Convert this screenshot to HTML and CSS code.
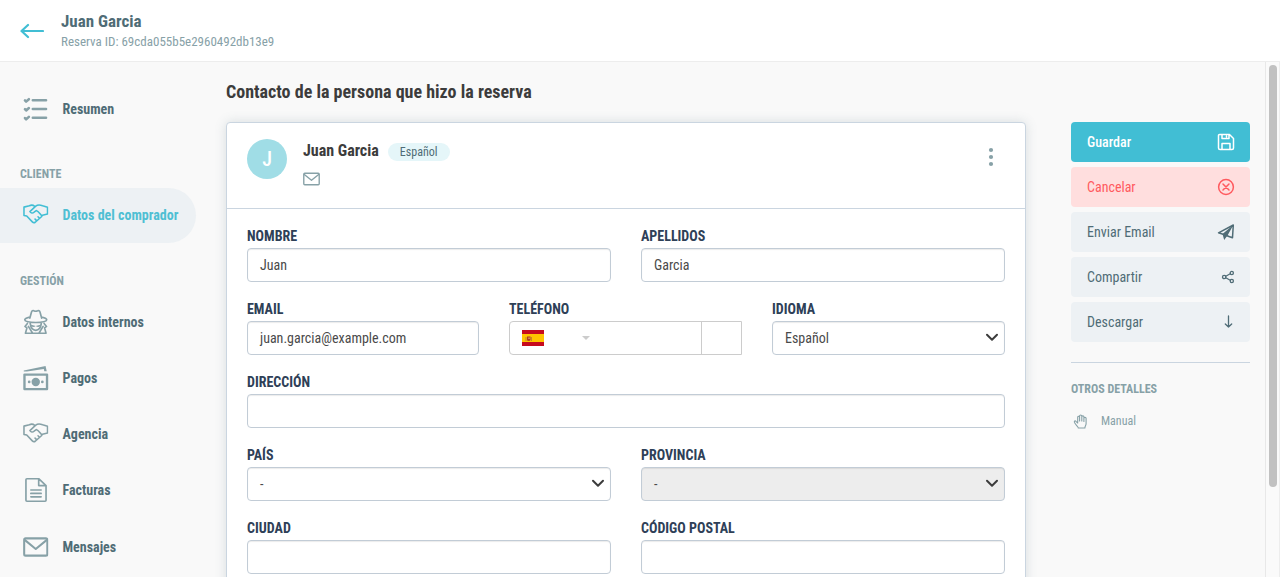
FILE: index.html
```
<!DOCTYPE html>
<html lang="es">
<head>
    <meta charset="UTF-8">
    <meta name="viewport" content="width=device-width, initial-scale=1.0">
    <title>Juan Garcia - Reserva</title>
    <link rel="stylesheet" href="styles.css">
</head>
<body>
    <!-- shared icons -->
    <svg class="sprite" width="0" height="0">
        <symbol id="handshake" viewBox="0 0 26 20">
            <path d="M12 2.200C10.500 1 8 .8 6.500 1.600L1 3v8.500l2.800.6L9.500 18c1 1 2 1 3 .4l6.300-5.600 1-1.600 5.200-1.200V3L20 1.600C17.500.7 14.500.8 13 2L7 7.500c.8 1.900 3 1.900 4.300.7L13.500 6.500c2 .5 4 3.500 5.700 5.300M15.300 12.800l1.500 1.500M12.300 15.200l1.500 1.500"/>
        </symbol>
        <symbol id="envelope" viewBox="0 0 26 20">
            <rect x="1.200" y="1.200" width="23.600" height="17.600" rx="1.500"/>
            <path d="m2 3 11 9L24 3"/>
        </symbol>
    </svg>

    <header class="topbar">
        <a href="#" class="back">
            <svg width="24" height="16" viewBox="0 0 24 16"><path d="M8 2 1.500 8 8 14M2 8h21"/></svg>
        </a>
        <div>
            <div class="topbar-name">Juan Garcia</div>
            <div class="topbar-id">Reserva ID: 69cda055b5e2960492db13e9</div>
        </div>
    </header>

    <div class="layout">
        <nav class="sidebar">
            <a href="#" class="nav-item">
                <svg class="nav-icon" viewBox="0 0 26 26"><g stroke-width="2.600"><path d="M10 4h13.500M10 13h13.500M10 22h13.500M2 4.200l1.200 1.300L6 3M2 13.200l1.200 1.300L6 12M2 22.200l1.200 1.300L6 21"/></g></svg>
                <span>Resumen</span>
            </a>
            <div class="nav-title">CLIENTE</div>
            <a href="#" class="nav-item active">
                <svg class="nav-icon shake"><use href="#handshake"/></svg>
                <span>Datos del comprador</span>
            </a>
            <div class="nav-title">GESTIÓN</div>
            <a href="#" class="nav-item">
                <svg class="nav-icon spy" viewBox="0 0 26 26"><path d="M7 9 8.600 3c.4-1.400 1.500-1.900 2.500-1.400 1.300.6 2.500.6 3.800 0 1-.5 2.100 0 2.500 1.400L19 9M6.800 8C3.500 8.700 1.800 9.700 1.800 10.800c0 1.700 5 2.700 11.200 2.700s11.200-1 11.200-2.700c0-1.100-1.700-2.100-5-2.800M7.300 14.500c.5 4 2.700 7 5.700 7s5.200-3 5.700-7M4.500 14.500 2 17.500l2 1.500-1.500 5.500h21L22 19l2-1.500-2.500-3M5.500 17.500l4 6.500M20.500 17.500l-4 6.500"/><path class="fill" d="M7.500 15.500 13 17l5.500-1.500c0 2.500-3.500 3.300-5.500 1.500-2 1.800-5.500 1-5.500-1.500z"/></svg>
                <span>Datos internos</span>
            </a>
            <a href="#" class="nav-item">
                <svg class="nav-icon" viewBox="0 0 26 26">
                    <rect x="1.500" y="9.500" width="23" height="14.800" stroke-width="2.400"/>
                    <path class="fill" d="M.8 5.300 23 .8l1.200 5.400h-2.500l-.5-2.400L4 6.300H.8z"/>
                    <circle class="fill" cx="13" cy="17" r="4.300"/>
                    <circle class="fill" cx="6.300" cy="17" r="1.400"/>
                    <circle class="fill" cx="19.700" cy="17" r="1.400"/>
                </svg>
                <span>Pagos</span>
            </a>
            <a href="#" class="nav-item">
                <svg class="nav-icon shake"><use href="#handshake"/></svg>
                <span>Agencia</span>
            </a>
            <a href="#" class="nav-item">
                <svg class="nav-icon" viewBox="0 0 26 26"><path d="M16 1.500H4q-1 0-1 1v21q0 1 1 1h18.500q1 0 1-1v-15zV8.500h7.500M8 13h10.500M8 16.500h10.500M8 20h10.500" stroke-width="1.700"/></svg>
                <span>Facturas</span>
            </a>
            <a href="#" class="nav-item">
                <svg class="nav-icon thick"><use href="#envelope"/></svg>
                <span>Mensajes</span>
            </a>
        </nav>

        <main class="content">
            <h1>Contacto de la persona que hizo la reserva</h1>

            <section class="card">
                <div class="card-header">
                    <div class="avatar">J</div>
                    <div class="person">
                        <div class="person-name">Juan Garcia <span class="badge">Español</span></div>
                        <svg class="mail" width="17" height="14"><use href="#envelope"/></svg>
                    </div>
                    <svg class="dots" width="6" height="20" viewBox="0 0 6 20"><circle cx="3" cy="3" r="2.100"/><circle cx="3" cy="10" r="2.100"/><circle cx="3" cy="17" r="2.100"/></svg>
                </div>

                <form class="form">
                    <div class="row">
                        <div class="field">
                            <label>NOMBRE</label>
                            <div class="input">Juan</div>
                        </div>
                        <div class="field">
                            <label>APELLIDOS</label>
                            <div class="input">Garcia</div>
                        </div>
                    </div>
                    <div class="row thirds">
                        <div class="field">
                            <label>EMAIL</label>
                            <div class="input">juan.garcia@example.com</div>
                        </div>
                        <div class="field">
                            <label>TELÉFONO</label>
                            <div class="phone">
                                <div class="phone-number">
                                    <svg width="24" height="18" viewBox="0 0 24 18">
                                        <path fill="#c60b1e" d="M1 1h22v16H1z"/>
                                        <path fill="#ffc400" d="M1 5h22v8H1z"/>
                                        <path fill="#c8842b" d="M4.500 8h1v4h-1zM10 8h1v4h-1z"/>
                                        <path fill="#ad3b20" d="M6 7.500h3.500v3.200c0 1.600-3.500 1.600-3.500 0z"/>
                                        <path fill="#d9a06a" d="M7.300 8.500h1.500V10H7.300z"/>
                                    </svg>
                                    <span class="caret"></span>
                                </div>
                                <div class="phone-addon"></div>
                            </div>
                        </div>
                        <div class="field">
                            <label>IDIOMA</label>
                            <div class="input select">Español<svg width="14" height="9" viewBox="0 0 14 9"><path d="m2 1.700 5 5 5-5"/></svg></div>
                        </div>
                    </div>
                    <div class="row">
                        <div class="field">
                            <label>DIRECCIÓN</label>
                            <div class="input"></div>
                        </div>
                    </div>
                    <div class="row">
                        <div class="field">
                            <label>PAÍS</label>
                            <div class="input select">-<svg width="14" height="9" viewBox="0 0 14 9"><path d="m2 1.700 5 5 5-5"/></svg></div>
                        </div>
                        <div class="field">
                            <label>PROVINCIA</label>
                            <div class="input select disabled">-<svg width="14" height="9" viewBox="0 0 14 9"><path d="m2 1.700 5 5 5-5"/></svg></div>
                        </div>
                    </div>
                    <div class="row">
                        <div class="field">
                            <label>CIUDAD</label>
                            <div class="input"></div>
                        </div>
                        <div class="field">
                            <label>CÓDIGO POSTAL</label>
                            <div class="input"></div>
                        </div>
                    </div>
                </form>
            </section>
        </main>

        <aside class="actions">
            <a href="#" class="btn primary">Guardar
                <svg width="18" height="18" viewBox="0 0 18 18"><path d="M2.500 1.500h10l4 4v9.500a1.500 1.500 0 0 1-1.500 1.500H3A1.500 1.500 0 0 1 1.500 15V2.500a1 1 0 0 1 1-1zM5 1.500v4h7v-4M5 16.500v-6h8v6M9.500 3v1"/></svg>
            </a>
            <a href="#" class="btn danger">Cancelar
                <svg width="18" height="18" viewBox="0 0 18 18"><circle cx="9" cy="9" r="7.400"/><path d="m6 6 6 6M12 6l-6 6"/></svg>
            </a>
            <a href="#" class="btn">Enviar Email
                <svg width="18" height="18" viewBox="0 0 18 18"><path d="M6 11.300 1.500 9.800 16.300 2l-.8 12.800-4.300-1.600"/><path class="fill" d="M5.500 11 16.500 1.800 10.800 12l1.200 1.500-2.500.2L7.200 17z"/></svg>
            </a>
            <a href="#" class="btn">Compartir
                <svg class="thin" width="14" height="14" viewBox="0 0 14 14"><circle cx="3.200" cy="7" r="1.700"/><circle cx="10.800" cy="3" r="1.600"/><circle cx="10.800" cy="11" r="1.600"/><path d="m4.800 6.200 4.400-2.400M4.800 7.800l4.400 2.400"/></svg>
            </a>
            <a href="#" class="btn">Descargar
                <svg class="thin" width="14" height="14" viewBox="0 0 14 14"><path d="M7.500 1v11M4.300 9l3.200 3 3.200-3"/></svg>
            </a>
            <div class="details">
                <div class="details-title">OTROS DETALLES</div>
                <div class="details-item">
                    <svg width="15" height="15" viewBox="0 0 15 15"><path d="M4.700 8.500V3.200c0-1.200 1.900-1.200 1.900 0V7 2c0-1.400 2.200-1.400 2.200 0v5-4.200c0-1.300 2.100-1.300 2.100 0V7.500 4.300c0-1.300 2.200-1.300 2.200 0V9.500c0 2-1.200 2.500-1.200 4.500H5.300C5.300 12.500 3 11.500 1.500 8.500c-.6-1.300.6-2.200 1.500-1.200L4.700 9"/></svg>
                    Manual
                </div>
            </div>
        </aside>

        <div class="scrollbar"><div class="scroll-thumb"></div></div>
    </div>
</body>
</html>
```
FILE: styles.css
```
* {
    margin: 0;
    padding: 0;
    box-sizing: border-box;
}

body {
    height: 577px;
    overflow: hidden;
    display: flex;
    flex-direction: column;
    background: #f9f9f9;
    color: #4a4a4a;
    font-family: "Roboto Condensed", Roboto, "Liberation Sans", sans-serif;
    font-stretch: 75%;
    font-size: 14px;
    line-height: 20px;
}

a {
    color: inherit;
    text-decoration: none;
}

svg {
    fill: none;
    stroke: currentColor;
    stroke-width: 1.5;
    stroke-linejoin: round;
    stroke-linecap: round;
    flex-shrink: 0;
}

.fill {
    fill: currentColor;
    stroke: none;
}

.sprite {
    display: block;
}

.topbar {
    height: 62px;
    flex-shrink: 0;
    display: flex;
    align-items: center;
    gap: 17px;
    padding-left: 20px;
    background: #fff;
    border-bottom: 1px solid #ededed;
}

.back {
    color: #41bed4;
    height: 16px;
}

.back svg {
    display: block;
    stroke-width: 2.2;
}

.topbar-name {
    padding-top: 1px;
    color: #4f6c76;
    font-size: 17px;
    font-weight: 700;
}

.topbar-id {
    color: #87a1a7;
    font-size: 13px;
    line-height: 21px;
}

.layout {
    display: flex;
    flex: 1;
    min-height: 0;
    overflow: hidden;
}

/* sidebar */
.sidebar {
    width: 196px;
    flex-shrink: 0;
    padding-top: 19px;
}

.nav-item {
    display: flex;
    align-items: center;
    gap: 14px;
    height: 55px;
    margin-bottom: 1.2px;
    padding-left: 23px;
    border-radius: 0 28px 28px 0;
    color: #4f6c76;
    font-weight: 700;
}

.nav-icon {
    width: 25.5px;
    height: 26px;
    color: #87a1a7;
}

.thick {
    stroke-width: 2.1;
}

.shake {
    margin-top: -2px;
    stroke-width: 1.6;
}

.spy {
    stroke-width: 1.7;
}

.active {
    background: #edf1f4;
    color: #4fbfd3;
}

.active .nav-icon {
    color: #41bed4;
}

.nav-title {
    padding: 27px 0 3.5px 20px;
    color: #87a1a7;
    font-size: 12px;
    font-weight: 700;
}

/* contact card */
.content {
    width: 800px;
    margin-left: 30px;
    padding-top: 20px;
}

h1 {
    color: #3c3c3c;
    font-size: 18px;
    line-height: 20px;
    margin-bottom: 20px;
}

.card {
    background: #fff;
    border: 1px solid #cad5e0;
    border-radius: 4px;
    box-shadow: 0 0 12px rgba(79, 108, 118, 0.2);
}

.card-header {
    display: flex;
    height: 86px;
    padding: 16px 20px;
    border-bottom: 1px solid #cad5e0;
}

.avatar {
    width: 40px;
    height: 40px;
    border-radius: 50%;
    background: #a0dde6;
    color: #fff;
    font-size: 20px;
    font-weight: 500;
    line-height: 40px;
    text-align: center;
}

.person {
    flex: 1;
    margin-left: 16px;
}

.person-name {
    display: flex;
    align-items: center;
    gap: 9px;
    height: 24px;
    color: #3c3c3c;
    font-size: 16px;
    font-weight: 700;
}

.badge {
    height: 18px;
    padding: 0 12px;
    margin-top: 2px;
    border-radius: 9px;
    background: #e5f6f9;
    color: #4f6c76;
    font-size: 12px;
    font-weight: 400;
    line-height: 18px;
}

.mail {
    display: block;
    margin-top: 8.5px;
    color: #87a1a7;
    stroke-width: 2.1;
}

.dots {
    margin: 8px 11px 0 0;
    fill: #87a1a7;
    stroke: none;
}

.form {
    padding: 17px 20px 0;
}

.row {
    display: flex;
    gap: 30px;
    height: 73px;
}

.thirds {
    display: grid;
    grid-template-columns: 232px 233px 233px;
}

.field {
    flex: 1;
}

label {
    display: block;
    height: 22px;
    color: #2e4057;
    font-weight: 700;
}

.input {
    height: 34px;
    padding: 0 12px;
    background: #fff;
    border: 1px solid #c2ccd6;
    border-radius: 4px;
    box-shadow: inset 0 1px 1px rgba(0, 0, 0, 0.08);
    line-height: 33px;
}

.select {
    display: flex;
    justify-content: space-between;
    padding-right: 5px;
}

.select svg {
    margin-top: 11px;
    color: #3c3c3c;
    stroke-width: 2;
}

.disabled {
    background: #ededed;
}

.phone {
    display: flex;
    height: 34px;
    border: 1px solid #ccc;
    border-radius: 4px 0 0 4px;
}

.phone-number {
    flex: 1;
    display: flex;
    align-items: center;
    gap: 37px;
    padding-left: 11px;
}

.phone-number svg {
    stroke: none;
}

.phone-addon {
    width: 40px;
    border-left: 1px solid #ccc;
}

.caret {
    border: 4px solid transparent;
    border-top-color: #ccc;
    border-bottom: 0;
}

/* right column */
.actions {
    width: 179px;
    margin-left: 45px;
    padding-top: 60px;
}

.btn {
    display: flex;
    align-items: center;
    justify-content: space-between;
    height: 40px;
    margin-bottom: 5px;
    padding: 0 15px 0 16px;
    border-radius: 4px;
    background: #edf1f4;
    color: #4f6c76;
}

.primary {
    background: #41bed4;
    color: #fff;
    font-weight: 500;
}

.danger {
    background: #ffdede;
    color: #ff5a5f;
}

.thin {
    stroke-width: 1.3;
}

.details {
    margin-top: 20px;
    padding-top: 16px;
    border-top: 1px solid #cad5e0;
    color: #87a1a7;
    font-size: 12px;
}

.details-title {
    font-weight: 700;
}

.details-item {
    display: flex;
    align-items: center;
    gap: 13px;
    margin-top: 12px;
    padding-left: 2px;
}

.details-item svg {
    stroke-width: 1.1;
}

.scrollbar {
    width: 15px;
    margin-left: auto;
    padding: 3px 2px 0 3px;
    border-left: 1px solid #e8e8e8;
    border-right: 1px solid #ededed;
    background: #fafafa;
}

.scroll-thumb {
    width: 8px;
    height: 422px;
    border-radius: 4px;
    background: #c1c1c1;
}
```
